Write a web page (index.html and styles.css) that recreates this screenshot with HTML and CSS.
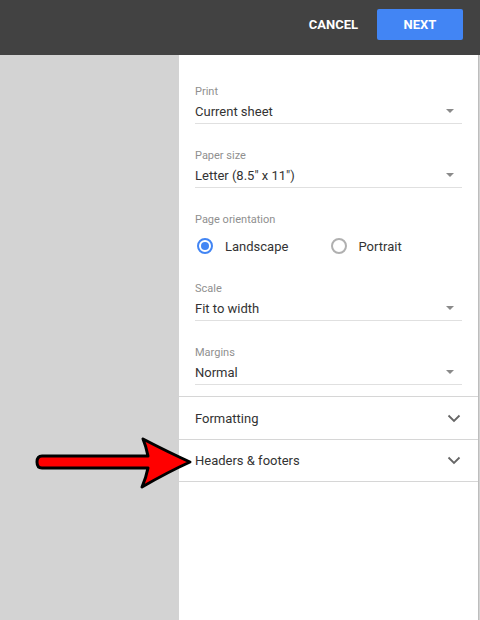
FILE: index.html
```html
<!DOCTYPE html>
<html>
<head>
<meta charset="utf-8">
<link rel="stylesheet" href="styles.css">
</head>
<body>
<div class="topbar">
  <button class="btn-cancel">CANCEL</button>
  <button class="btn-next">NEXT</button>
</div>
<div class="main">
  <div class="side">
    <svg class="arrow" width="170" height="60" viewBox="30 434 170 60">
      <path d="M42 456 L148 456 Q146 446 143 439 Q168 452 190 462 Q168 472 142 487 Q146 478 148 468 L42 468 Q37 468 37 462 Q37 456 42 456 Z" fill="#ff0000" stroke="#000" stroke-width="3" stroke-linejoin="round"/>
    </svg>
  </div>
  <div class="panel">
    <div class="fields">
      <div class="field">
        <div class="label">Print</div>
        <div class="select"><span>Current sheet</span><span class="tri"></span></div>
      </div>
      <div class="field">
        <div class="label">Paper size</div>
        <div class="select"><span>Letter (8.5" x 11")</span><span class="tri"></span></div>
      </div>
      <div class="field field-radio">
        <div class="label">Page orientation</div>
        <div class="radios">
          <div class="radio"><span class="dot on"></span><span>Landscape</span></div>
          <div class="radio"><span class="dot"></span><span>Portrait</span></div>
        </div>
      </div>
      <div class="field">
        <div class="label">Scale</div>
        <div class="select"><span>Fit to width</span><span class="tri"></span></div>
      </div>
      <div class="field">
        <div class="label">Margins</div>
        <div class="select"><span>Normal</span><span class="tri"></span></div>
      </div>
    </div>
    <div class="section"><span>Formatting</span>
      <svg width="14" height="9" viewBox="0 0 14 9"><path d="M1.5 1.5 L7 7 L12.5 1.5" fill="none" stroke="#666" stroke-width="1.8"/></svg>
    </div>
    <div class="section"><span>Headers &amp; footers</span>
      <svg width="14" height="9" viewBox="0 0 14 9"><path d="M1.5 1.5 L7 7 L12.5 1.5" fill="none" stroke="#666" stroke-width="1.8"/></svg>
    </div>
  </div>
</div>
</body>
</html>
```
FILE: styles.css
```css
* { box-sizing: border-box; }
html, body { margin: 0; padding: 0; }
body {
  width: 480px; height: 620px; overflow: hidden;
  font-family: Roboto, "Liberation Sans", sans-serif;
  background: #d3d3d3;
  display: flex; flex-direction: column;
}
.topbar {
  height: 55px; background: #424242;
  display: flex; justify-content: flex-end; align-items: flex-start;
  padding: 9px 17px 0 0; gap: 19px; flex-shrink: 0;
}
.topbar button {
  border: none; font-family: Roboto, "Liberation Sans", sans-serif;
  font-weight: bold; font-size: 13px; color: #fff; border-radius: 2px;
  height: 31px;
}
.btn-cancel { background: transparent; padding: 0; }
.btn-next { background: #4285f4; width: 86px; }
.main { flex: 1; display: flex; }
.side { width: 179px; position: relative; background: #d3d3d3; }
.arrow { position: absolute; left: 30px; top: 379px; z-index: 2; overflow: visible; }
.panel {
  width: 300px; background: #fff; border-right: 1px solid #bdbdbd;
}
.fields { padding: 29px 16px 11px 16px; }
.field { margin-bottom: 24px; }
.field:last-child { margin-bottom: 0; }
.field-radio { margin-bottom: 16px; }
.label { font-size: 11px; color: #8f8f8f; height: 15px; line-height: 15px; }
.select {
  display: flex; justify-content: space-between; align-items: center;
  height: 25px; border-bottom: 1px solid #e0e0e0; font-size: 13px; color: #333;
}
.tri {
  width: 0; height: 0; border-left: 4px solid transparent; border-right: 4px solid transparent;
  border-top: 4px solid #8a8a8a; margin-right: 8px;
}
.radios { display: flex; height: 38px; align-items: center; font-size: 13px; color: #333; }
.radio { display: flex; align-items: center; gap: 12px; width: 136px; }
.dot {
  width: 16px; height: 16px; border-radius: 50%; border: 2px solid #b0b0b0; margin-left: 2px;
  position: relative;
}
.dot.on { border-color: #4285f4; }
.dot.on::after {
  content: ""; position: absolute; left: 2px; top: 2px; width: 8px; height: 8px;
  border-radius: 50%; background: #4285f4;
}
.section {
  height: 43px; border-top: 1px solid #d6d6d6; display: flex; align-items: center;
  justify-content: space-between; padding: 0 17px 0 16px; font-size: 13px; color: #333;
}
.section:last-child { border-bottom: 1px solid #d6d6d6; }
```
